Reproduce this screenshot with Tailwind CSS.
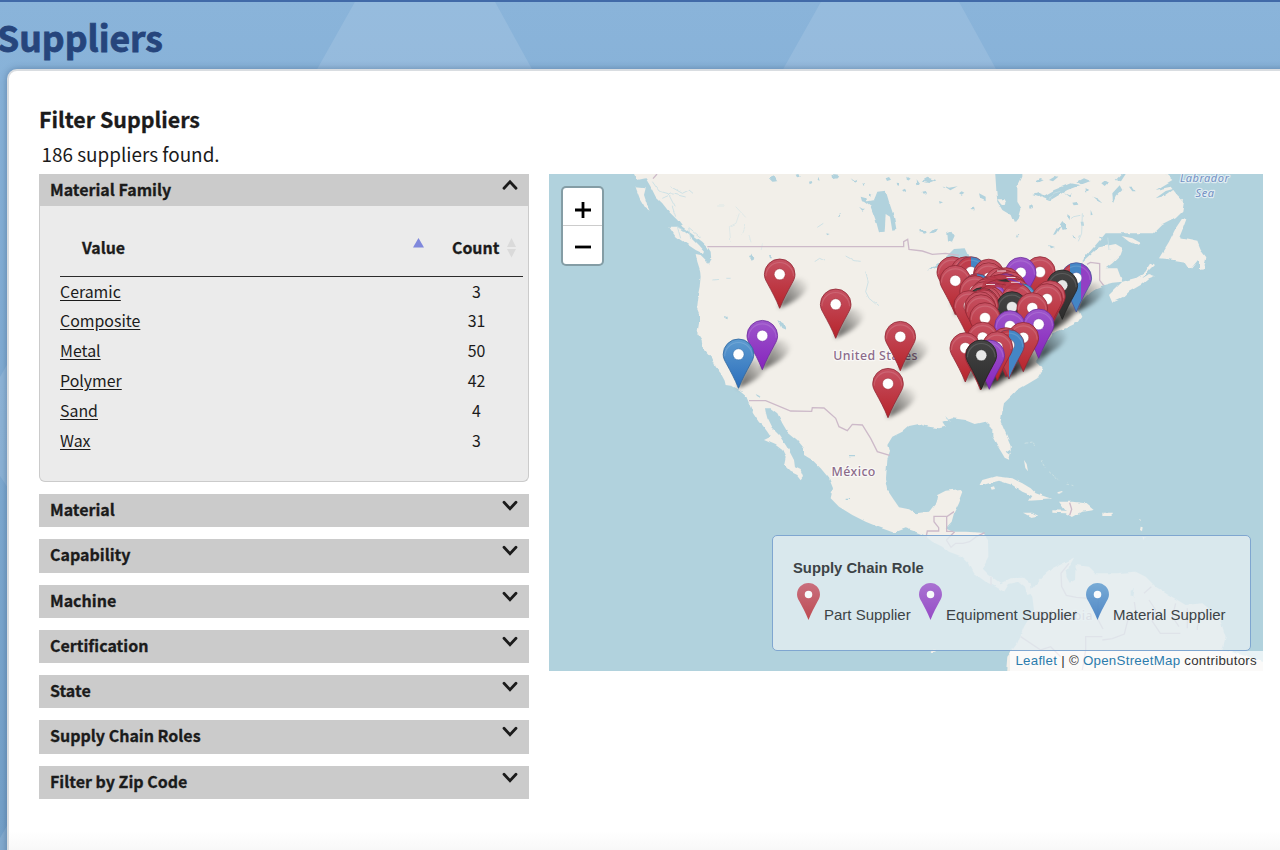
<!DOCTYPE html>
<html lang="en">
<head>
<meta charset="utf-8">
<title>Suppliers</title>
<script src="https://cdn.jsdelivr.net/npm/@tailwindcss/browser@4"></script>
</head>
<body class="relative h-[850px] w-[1280px] overflow-hidden bg-gradient-to-b from-[#8ab4da] to-[#74a0c8] font-['Noto_Sans_CJK_SC',sans-serif] text-[#1b1b1b]">
<svg class="absolute inset-0 h-full w-full" viewBox="0 0 1280 850" aria-hidden="true">
  <g fill="#fff" fill-opacity=".11"><path d="M356 0h138l44 80H311zM822 0h136l44 80H777zM0 377l8-14v125l-8-12zM0 838l8-14v26H0z"/></g>
</svg>
<header class="relative h-[69px] border-t-2 border-[#416aa8]">
  <h1 class="-ml-[3px] pt-[12px] text-[35.5px] leading-[46px] font-bold text-[#26457c] [-webkit-text-stroke:.8px_#26457c]">Suppliers</h1>
</header>
<main class="relative ml-[7px] flex h-[800px] w-[1300px] gap-5 rounded-tl-[10px] border-2 border-[#d9dde1] bg-gradient-to-b from-white from-[760px] to-[#f6f6f6] to-[785px] pt-[33px] pl-[30px] shadow-[0_0_7px_rgba(30,60,100,.4)]">
  <section class="w-[490px] shrink-0">
    <h2 class="-mt-[2px] h-8 text-[21.4px] leading-[33px] font-bold [-webkit-text-stroke:.3px_#1b1b1b]">Filter Suppliers</h2>
    <p class="mt-[5px] h-[34.5px] pl-[2.5px] text-[18.9px] leading-[30px]">186 suppliers found.</p>
    <div class="flex h-[32.5px] justify-between bg-[#cbcbcb] pr-[11px] pl-[11px]">
      <h3 class="text-[16px] leading-[31px] font-bold [-webkit-text-stroke:.3px_#1b1b1b]">Material Family</h3>
      <svg class="mt-[5px] h-3 w-4" viewBox="0 0 16 12" fill="none" stroke="#1b1b1b" stroke-width="2.8" stroke-linecap="round"><path d="M2 9.300 8 2.800l6 6.500"/></svg>
    </div>
    <div class="h-[276px] rounded-b-[6px] border border-t-0 border-[#cbcbcb] bg-[#ebebeb] pt-[19px] pr-[5px] pl-5">
      <table class="w-[463px] table-fixed text-[15.9px]">
        <colgroup><col class="w-[370px]"><col class="w-[93px]"></colgroup>
        <thead><tr class="h-[51px] border-b-[1.5px] border-[#2b2b2b] align-top">
          <th class="pl-[22px] text-left leading-[46px] font-bold [-webkit-text-stroke:.3px_#1b1b1b]"><div class="flex justify-between"><span>Value</span><svg class="mt-[13px] mr-[6px] h-[10px] w-[11px]" viewBox="0 0 11 10"><path d="M5.500 0 11 9.500H0z" fill="#7f88dc"/></svg></div></th>
          <th class="pl-[22px] text-left leading-[46px] font-bold [-webkit-text-stroke:.3px_#1b1b1b]"><div class="flex items-center gap-[7px]"><span>Count</span><svg class="h-5 w-[11px]" viewBox="0 0 11 20" fill="#dadada"><path d="M5.500 0 10 9H1zM5.500 19.500 10 11H1z"/></svg></div></th>
        </tr></thead>
        <tbody class="[&_a]:underline [&_a]:underline-offset-[2px] [&_td]:h-[29.9px] [&_td]:p-0 [&_td]:leading-[29.9px] [&_td+td]:text-center">
          <tr><td><a>Ceramic</a></td><td>3</td></tr>
          <tr><td><a>Composite</a></td><td>31</td></tr>
          <tr><td><a>Metal</a></td><td>50</td></tr>
          <tr><td><a>Polymer</a></td><td>42</td></tr>
          <tr><td><a>Sand</a></td><td>4</td></tr>
          <tr><td><a>Wax</a></td><td>3</td></tr>
        </tbody>
      </table>
    </div>
    <div class="mt-3 flex flex-col gap-3 text-[16px] leading-[31.5px] font-bold [-webkit-text-stroke:.3px_#1b1b1b] [&>div]:flex [&>div]:h-[33.3px] [&>div]:justify-between [&>div]:bg-[#cbcbcb] [&>div]:px-[11px] [&_svg]:mt-[6px] [&_svg]:h-3 [&_svg]:w-4">
      <div><h3>Material</h3><svg viewBox="0 0 16 12" fill="none" stroke="#1b1b1b" stroke-width="2.8" stroke-linecap="round"><path d="M2 2.300 8 8.800l6-6.500"/></svg></div>
      <div><h3>Capability</h3><svg viewBox="0 0 16 12" fill="none" stroke="#1b1b1b" stroke-width="2.8" stroke-linecap="round"><path d="M2 2.300 8 8.800l6-6.500"/></svg></div>
      <div><h3>Machine</h3><svg viewBox="0 0 16 12" fill="none" stroke="#1b1b1b" stroke-width="2.8" stroke-linecap="round"><path d="M2 2.300 8 8.800l6-6.500"/></svg></div>
      <div><h3>Certification</h3><svg viewBox="0 0 16 12" fill="none" stroke="#1b1b1b" stroke-width="2.8" stroke-linecap="round"><path d="M2 2.300 8 8.800l6-6.500"/></svg></div>
      <div><h3>State</h3><svg viewBox="0 0 16 12" fill="none" stroke="#1b1b1b" stroke-width="2.8" stroke-linecap="round"><path d="M2 2.300 8 8.800l6-6.500"/></svg></div>
      <div><h3>Supply Chain Roles</h3><svg viewBox="0 0 16 12" fill="none" stroke="#1b1b1b" stroke-width="2.8" stroke-linecap="round"><path d="M2 2.300 8 8.800l6-6.500"/></svg></div>
      <div><h3>Filter by Zip Code</h3><svg viewBox="0 0 16 12" fill="none" stroke="#1b1b1b" stroke-width="2.8" stroke-linecap="round"><path d="M2 2.300 8 8.800l6-6.500"/></svg></div>
    </div>
  </section>
  <section class="relative mt-[70px] h-[497px] w-[714px] shrink-0 overflow-hidden bg-[#b1d2dd] font-['Liberation_Sans',Arial,sans-serif]">
    <svg class="absolute inset-0 h-full w-full" viewBox="0 12 2142 1491">
      <defs>
        <filter id="coast" x="0" y="0" width="100%" height="100%"><feTurbulence type="fractalNoise" baseFrequency=".035" numOctaves="2" seed="4"/><feDisplacementMap in="SourceGraphic" scale="10" xChannelSelector="R" yChannelSelector="G"/><feGaussianBlur stdDeviation="1"/></filter>
      </defs>
      <g filter="url(#coast)">
      <g fill="#f2efe9">
        <path d="M255 -10V12L265 30 290 25 305 50 320 80 340 100 360 125 385 150 400 170 420 185 440 200 460 215 475 230 485 245 487 270 480 285 470 270 455 255 440 252 445 275 453 300 455 320 452 350 445 385 442 410 450 430 450 460 445 490 458 510 460 530 475 548 490 565 500 590 515 610 527 632 530 645 550 648 572 660 590 675 600 700 612 730 630 757 640 765 655 785 665 800 645 810 680 825 700 840 710 860 705 885 725 905 745 915 755 928 762 918 755 900 738 892 735 870 722 845 710 825 690 795 670 775 655 745 650 725 648 715 665 715 685 730 700 760 715 785 745 810 765 835 765 855 790 870 815 895 840 925 852 955 845 985 870 1010 910 1035 950 1055 990 1072 1035 1088 1070 1075 1100 1085 1125 1095 1150 1115 1180 1130 1200 1145 1240 1160 1260 1180 1275 1210 1310 1235 1340 1250 1365 1265 1380 1242 1410 1235 1428 1250 1435 1275 1450 1270 1445 1240 1425 1223 1385 1225 1355 1240 1320 1215 1300 1195 1318 1160 1317 1110 1300 1088 1250 1085 1210 1085 1190 1075 1208 1055 1215 1030 1230 1000 1243 965 1235 957 1190 962 1165 975 1160 1000 1140 1025 1100 1030 1080 1018 1050 1012 1035 990 1015 960 1008 925 1012 870 1020 845 1015 825 1030 800 1060 785 1080 768 1110 762 1140 770 1170 775 1190 770 1180 755 1210 745 1250 750 1280 762 1310 755 1330 775 1330 800 1350 835 1370 868 1380 872 1385 850 1385 825 1370 790 1355 755 1360 725 1365 700 1385 680 1405 660 1440 640 1465 625 1480 600 1470 585 1460 575 1490 520 1510 490 1550 475 1590 455 1600 440 1590 420 1600 390 1620 370 1640 355 1665 345 1690 338 1720 335 1705 295 1670 295 1690 280 1715 255 1722 235 1700 222 1650 232 1625 255 1600 278 1605 265 1640 225 1670 190 1740 190 1815 190 1840 165 1880 145 1900 125 1905 95 1885 75 1865 50 1820 60 1870 30 1850 12V-10Z"/>
        <path d="M360 170 385 170 420 195 450 225 468 245 465 252 440 240 410 220 380 200zM260 52 290 55 285 75 295 105 305 125 290 115 272 85zM1680 375 1690 398 1720 385 1740 365 1775 345 1800 325 1818 318 1800 312 1780 325 1800 300 1815 285 1805 278 1785 310 1760 325 1720 335zM1880 175 1900 145 1912 148 1900 180 1890 205 1920 210 1945 215 1955 240 1972 262 1965 298 1950 300 1950 270 1930 295 1920 298 1905 275 1860 268 1830 265 1845 240 1860 215zM1718 198 1750 205 1777 220 1765 226 1740 215z"/>
        <path d="M1290 948 1300 930 1340 919 1390 925 1420 940 1445 955 1460 970 1490 980 1512 988 1440 992 1450 978 1420 965 1390 945 1350 932 1320 940zM1530 995 1570 995 1610 1000 1634 1020 1600 1025 1570 1042 1550 1030 1510 1028 1510 1021 1550 1022zM1422 1028 1450 1028 1468 1037 1445 1041zM1660 1028h31v10h-31zM1325 952l10-3 3 8-10 2z"/>
        <path d="M1425 870l8 12 4 22-8-10zM1775 1070l6 2-2 12-6-4zM1770 1045l7 2-3 6zM1525 967l14-4 2 3-14 5zM1780 1100l7 2-3 8z"/>
        <path d="M1440 1265 1480 1220 1510 1195 1560 1170 1575 1163 1560 1190 1552 1220 1562 1238 1578 1230 1580 1185 1620 1190 1640 1210 1700 1210 1760 1205 1790 1220 1820 1250 1860 1275 1910 1305 1960 1300 2010 1340 2030 1400 2020 1440 2080 1455 2160 1480V1520H1370L1375 1460 1405 1420 1425 1370 1455 1320 1450 1280ZM1145 1442l14-4 2 6-14 5z"/>
      </g>
      <g fill="#b1d2dd">
        <path d="M1338 0 1342 60 1345 95 1360 120 1385 135 1395 160 1410 140 1417 115 1405 95 1405 50 1420 20V0z"/>
        <path d="M985 65 1010 62 1020 95 1035 140 1042 180 1030 182 1023 140 1010 132 1007 185 990 187 980 150 965 110 945 95 975 90z"/>
        <path d="M1130 302 1160 285 1190 262 1215 237 1250 235 1262 260 1290 290 1230 300 1165 290zM1195 190l12-5 10 15-8 18-12-4zM685 450l18 10 8 20-14-6zM935 80l14 4 4 14-14-4zM1290 70l20 10 0 14-16-8zM1535 165l8-12 8 10 0 14-10 3zM1140 190l14-12 10-2-8 12zM1110 178l24 8-6 5-16-4zM1515 195l12-22 12-6-16 26zM1480 80l35-20 50-20 30 5-40 15-50 30zM1585 35l20-10 20 8-26 10zM1690 70l22-24 8 14-20 20-8 20zM1630 80l16 6 14 14-16-8zM1740 50l10 0 10 14-10 0zM1820 85l30-22 30-8-32 22zM1700 30l18-18 12 0-14 22zM1450 75l18-6 20 8-20 4zM660 25l16-6 8 14-14 2zM850 15l18 2-4 8-12 2zM905 25l12 8 10-4-8 12zM1118 35l20-12 22 8-22 8zM1180 45l20 8 26-4-22 12zM1370 845l12-8 6 8-9 8zM600 258l10-4 6 14-8 4zM660 255l5 0 4 10-6 0zM525 438l8 2 0 8-6-2zM620 672l12 6 2 6-10-6zM900 855h18v4h-18zM890 986h16v4h-16zM1550 1200l16-6 6 18-10 14-10-10zM1745 1262l12-6-4 24-8-4zM1100 28l10 14-8 4zM1500 225l18 6-12 4zM1240 355l10 14-8 6z"/>
        <path d="M740 14l8-2 4 8-8 2zM780 32l8-2 2 6-8 4zM808 20l4 12-6-2zM870 132l5-2 2 6-6 2zM832 190l10 2-8 4zM960 70l10 4-6 6zM940 40l8 2-4 6zM1010 25l10-4 6 8-12 4zM1040 38l10 2 0 8-8-2zM1075 20l10 6-8 6zM930 110l10 6 8 0-8 6zM1060 60l8-4 4 8-8 4zM1120 65l10-2 4 6-10 2zM1170 90l12 4-10 4zM1230 70l8-6 8 4-8 6zM1265 115l10-2 2 8-10 0zM1460 35l14-8 10 4-14 6zM1500 30l20-12 8 2-16 14zM1545 70l14 6 10-6-8 12zM1570 98l14-2 4 8-14 2zM1440 110l10-4 2 8-10 2zM1595 155l8 0 2 12-8 0zM1555 130l8 6 0 8-8-4zM1610 50l10 10-10 8zM1660 40l10-8 10 6-10 10zM1570 195l14 10-8 3zM1650 200l10 2-6 6zM1625 120l6 14-6 2zM1400 205l4-12 4 2z"/>
      </g>
      <path fill="#f2efe9" d="M1345 88l22 0 6 12-16 4z"/>
      <g fill="none" stroke="#c6dfe4" stroke-width="2.500">
        <path d="M310 35l20 28 28 8 20 40M365 50l35 20 20-10 12 10M340 85l30-14 40 10M395 205l-10-35 24 14M370 110l10 30M425 210l-6-38 36 30"/>
        <path d="M545 215l-4-45 20-10 10-30M505 108h22M560 110l30 32M575 195l12-30M600 195l6 22M640 220l-4 20" stroke="#dbe7e7"/>
        <path d="M800 275l15-10 16 8M890 258l25 14 20 2M950 305l8 30-8 30 10 20 30 25M490 330l20-2M535 325l10 0M805 172l18-12M1500 90l14-20 20-6M1560 150l14-10 20-4M1680 240l-4-40M1600 130l-2 60-10 24M1190 740l15 16"/>
        <path d="M1430 820l20-4 8 14M1475 870l14 24M1500 905l30 26M1555 942l18 5" stroke="#cfe2e3" stroke-dasharray="8 5"/>
      </g>
      </g>
      <g fill="none" stroke="#cdbac9" stroke-width="4">
        <path d="M475 230H1064V215L1076 208 1080 238 1120 243 1150 253 1190 250 1230 256M312 26l12-14M1614 283l10-6 28 4 0 50 12 15M600 692H650L725 723 788 724 790 713 825 714 860 745 870 770 895 782 910 763 940 765 965 805 985 845 1022 856"/>
        <path d="M1215 1025l-20 14h-40v16l14 18v10h-34l-5 24M1193 1040v44h20M1192 1110l25-25M1192 1110l14 22 14-12h22l20-5 20-15 25-12M1562 998l6 20-6 18M1326 1220v26M1560 1180l-24 30 2 40 14 26 30 6 66 5-2 60 16 30M1660 1410l30-4 36-14 10-40 26-16-6-40M1785 1270l22-20M1800 1290l20 30-10 34 24 36 60 0M1880 1300l-10 40 20 30M1915 1315l0 60M1960 1320l-15 50 0 10M1415 1400l60 40 30-10 30 30M1600 1500l10-60 0-40 50 0"/>
      </g>
      <g font-family="Noto Sans" text-anchor="middle" stroke="#fff" stroke-opacity=".6" stroke-width="7" paint-order="stroke" stroke-linejoin="round">
        <g fill="#8c6b8a" font-weight="500" font-size="37" letter-spacing="1.300"><text x="980" y="570">United States</text><text x="914" y="918">México</text><text x="1543" y="1350" fill-opacity=".6">Colombia</text></g>
        <g fill="#7391c4" font-size="33" font-style="italic" letter-spacing="1.600"><text x="1967" y="36">Labrador</text><text x="1968" y="80">Sea</text></g>
      </g>
    </svg>
    <svg id="pins" class="absolute inset-0 h-full w-full" viewBox="549 174 714 497">
      <defs>
        <linearGradient id="red" x2="0" y2="1"><stop stop-color="#c65263"/><stop offset="1" stop-color="#b7242b"/></linearGradient>
        <linearGradient id="purple" x2="0" y2="1"><stop stop-color="#9d56cb"/><stop offset="1" stop-color="#8624bd"/></linearGradient>
        <linearGradient id="blue" x2="0" y2="1"><stop stop-color="#5d9bd0"/><stop offset="1" stop-color="#2a6dbb"/></linearGradient>
        <linearGradient id="black" x2="0" y2="1"><stop stop-color="#454545"/><stop offset="1" stop-color="#2c2c2c"/></linearGradient>
        <linearGradient id="redblue"><stop offset=".5" stop-color="#bf3d4b"/><stop offset=".5" stop-color="#4486c5"/></linearGradient>
        <linearGradient id="three"><stop offset=".3" stop-color="#bf3d4b"/><stop offset=".3" stop-color="#4486c5"/><stop offset=".66" stop-color="#4486c5"/><stop offset=".66" stop-color="#9240c4"/></linearGradient>
        <linearGradient id="shade" gradientUnits="userSpaceOnUse" x1="2" y1="-2" x2="27" y2="-24"><stop stop-color="#000" stop-opacity=".6"/><stop offset=".5" stop-color="#000" stop-opacity=".35"/><stop offset="1" stop-color="#000" stop-opacity=".04"/></linearGradient>
        <path id="pin" d="M0 0C-4-10-8-17-12-24.500-14-28-15.300-30.500-15.300-34A15.300 15.300 0 0 1 15.300-34C15.300-30.500 14-28 12-24.500 8-17 4-10 0 0Z"/>
        <filter id="soft" x="-20%" y="-20%" width="140%" height="140%"><feGaussianBlur stdDeviation="2"/></filter>
      </defs>
    </svg>
    <div class="absolute top-[12px] left-[12px] flex h-[80px] w-[43px] flex-col rounded-[5px] border-2 border-black/25 bg-white bg-clip-padding">
      <div class="flex h-[38px] items-center justify-center border-b border-[#ccc] pt-[6px]"><svg class="h-4 w-4" viewBox="0 0 16 16" stroke="#000" stroke-width="2.800"><path d="M0 8h16M8 0v16"/></svg></div>
      <div class="flex flex-1 items-center justify-center pt-[4px]"><svg class="h-4 w-4" viewBox="0 0 16 16" stroke="#000" stroke-width="2.800"><path d="M0 8h16"/></svg></div>
    </div>
    <div class="absolute top-[361px] left-[223px] h-[116px] w-[479px] rounded-[5px] border-[1.5px] border-[#7fa6d0] bg-[#e4edf1]/80 pt-[22px] pl-[20px] text-[15px] text-[#3c4346]">
      <p class="h-[20px] text-[14.8px] leading-[20px] font-bold">Supply Chain Role</p>
      <div class="mt-[5px] flex h-9 [&_svg]:h-[37px] [&_svg]:w-[23px] [&_svg]:opacity-80 [&_span]:mt-[22px] [&_span]:leading-[20px] [&_span]:whitespace-nowrap">
        <div class="flex w-[121px] gap-[4px] pl-[4px]"><svg viewBox="-15.3 -49.3 30.6 49.3"><use href="#pin" fill="url(#red)"/><circle cy="-34" r="5" fill="#fff"/></svg><span>Part Supplier</span></div>
        <div class="flex w-[167px] gap-[4px] pl-[5px]"><svg viewBox="-15.3 -49.3 30.6 49.3"><use href="#pin" fill="url(#purple)"/><circle cy="-34" r="5" fill="#fff"/></svg><span>Equipment Supplier</span></div>
        <div class="flex gap-[4px] pl-[5px]"><svg viewBox="-15.3 -49.3 30.6 49.3"><use href="#pin" fill="url(#blue)"/><circle cy="-34" r="5" fill="#fff"/></svg><span>Material Supplier</span></div>
      </div>
    </div>
    <div class="absolute right-0 bottom-0 h-[20px] bg-white/70 pr-[6px] pl-[5px] text-[13.3px] leading-[20px] tracking-[.27px] whitespace-nowrap text-[#333]"><span class="text-[#2b7cad]">Leaflet</span> | © <span class="text-[#2b7cad]">OpenStreetMap</span> contributors</div>
  </section>
</main>
<script>
// [x, y, role]: centre of each marker's white hole
const markers = [
  [779.7,274.3,'red'],[835.7,304.3,'red'],[900.3,336.7,'red'],[888,383.7,'red'],[762.3,335.7,'purple'],[738.5,354.3,'blue'],
  [952.3,272,'red'],[966,272,'red'],[971,272,'redblue'],[1040,272,'red'],[1020.7,272.7,'purple'],[1076.3,278,'three'],
  [988.7,274.5,'red'],[988.7,278,'red'],[955.3,280.7,'red'],[1000,283,'red'],[1006,283,'red'],[1062.3,285.3,'black'],
  [1003,285,'red'],[1010,287,'red'],[977,289,'redblue'],[975,291,'red'],[1006,289,'purple'],[1012,291,'red'],[999,290,'red'],[990,292,'red'],
  [1000,295,'black'],[996,295,'red'],[987,294,'red'],[1015,294,'red'],[990,297,'purple'],[984,297,'red'],
  [1021,299,'blue'],[1017,299,'red'],[1050,296,'red'],[1047,299,'red'],[990,302,'red'],[986,302,'red'],[982,303,'black'],[984,304.5,'red'],[969,306,'red'],
  [1012,307,'black'],[1032.3,308,'red'],[983,305,'red'],[980,307,'red'],[981,310,'red'],[985,318,'red'],[1010,326,'purple'],[1038.7,324.3,'purple'],
  [982.7,337.5,'red'],[1023.3,337.7,'red'],[1006,343,'red'],[1009,345,'redblue'],[965.3,348,'red'],[997.3,347,'red'],[989.3,355.3,'purple'],[980.5,356,'red'],[981.3,355.3,'black']
];
const edge = {red:'#8f2733',purple:'#6b2c9b',blue:'#2c659d',black:'#222',redblue:'#7e3750',three:'#49549b'};
let shadows = '', pins = '';
for (const [x, y, c] of markers) {
  shadows += `<path transform="translate(${x} ${y + 34})" d="M-1 0L7-20C11-32 24-33 28-25 30-16 14-5 -1 0Z"/>`;
  pins += `<g transform="translate(${x} ${y + 34})"><use href="#pin" fill="url(#${c})" stroke="${edge[c]}" stroke-width=".8"/><path d="M-13.8-32A13.8 13.8 0 1 1 13.8-32" fill="none" stroke="#fff" stroke-opacity=".13" stroke-width="1.2"/><circle cy="-34" r="5.5" fill="${c === 'black' ? '#e8e8e8' : '#fff'}" stroke="${edge[c]}" stroke-opacity=".5" stroke-width=".8"/></g>`;
}
// strip of overlapping marker tops that hides the holes of the crowded rows behind
const crowd = '<path d="M984 281q12-10 30-4l10 8-8 5-20-3-16 5z" fill="#b53646" fill-opacity=".8"/><path d="M985 285q10-8 26-5M980 290q12-9 26-5M994 276q14-6 26 4" fill="none" stroke="#8f2733" stroke-opacity=".7"/><path d="M997 281l9-2 4 3z" fill="#333"/><path d="M1008 279q8 1 14 6" fill="none" stroke="#7d33ad" stroke-width="1.500"/>';
const dashes = '<path d="M997 271h9M1006.5 277.5h9M1011 282.3h9M986 284.5h9" stroke="#fff" stroke-opacity=".75" stroke-width="1"/>';
document.getElementById('pins').insertAdjacentHTML('beforeend', `<g filter="url(#soft)" fill="url(#shade)">${shadows}</g>${pins}${crowd}${dashes}`);
</script>
</body>
</html>
